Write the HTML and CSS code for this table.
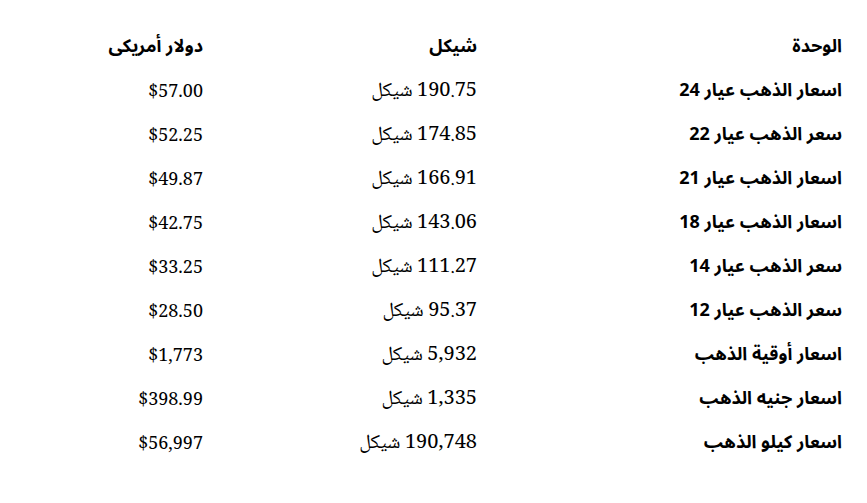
FILE: index.html
```html
<!DOCTYPE html>
<html lang="ar" dir="rtl">
<head><meta charset="utf-8"><title>أسعار الذهب</title><link rel="stylesheet" href="styles.css"></head>
<body>
<table class="prices">
  <thead>
    <tr><th class="c-unit">الوحدة</th><th class="c-ils">شيكل</th><th class="c-usd">دولار أمريكى</th></tr>
  </thead>
  <tbody>
    <tr><td class="c-unit">اسعار الذهب عيار 24</td><td class="c-ils">190.75 شيكل</td><td class="c-usd"><span class="usd">$57.00</span></td></tr>
    <tr><td class="c-unit">سعر الذهب عيار 22</td><td class="c-ils">174.85 شيكل</td><td class="c-usd"><span class="usd">$52.25</span></td></tr>
    <tr><td class="c-unit">اسعار الذهب عيار 21</td><td class="c-ils">166.91 شيكل</td><td class="c-usd"><span class="usd">$49.87</span></td></tr>
    <tr><td class="c-unit">اسعار الذهب عيار 18</td><td class="c-ils">143.06 شيكل</td><td class="c-usd"><span class="usd">$42.75</span></td></tr>
    <tr><td class="c-unit">سعر الذهب عيار 14</td><td class="c-ils">111.27 شيكل</td><td class="c-usd"><span class="usd">$33.25</span></td></tr>
    <tr><td class="c-unit">سعر الذهب عيار 12</td><td class="c-ils">95.37 شيكل</td><td class="c-usd"><span class="usd">$28.50</span></td></tr>
    <tr><td class="c-unit">اسعار أوقية الذهب</td><td class="c-ils">5,932 شيكل</td><td class="c-usd"><span class="usd">$1,773</span></td></tr>
    <tr><td class="c-unit">اسعار جنيه الذهب</td><td class="c-ils">1,335 شيكل</td><td class="c-usd"><span class="usd">$398.99</span></td></tr>
    <tr><td class="c-unit">اسعار كيلو الذهب</td><td class="c-ils">190,748 شيكل</td><td class="c-usd"><span class="usd">$56,997</span></td></tr>
  </tbody>
</table>
</body>
</html>
```
FILE: styles.css
```css
html,body{margin:0;background:#fff;color:#000}
body{padding:24px 25px 0}
.prices{width:817px;border-collapse:collapse;table-layout:fixed}
.prices th,.prices td{height:44px;padding:0;text-align:right;vertical-align:middle}
.c-unit{width:365px}
.c-ils{width:274px}
.prices th{font-family:"Noto Sans Arabic",sans-serif;font-weight:700;font-size:18px}
.prices td.c-unit{font-family:"Noto Sans Arabic",sans-serif;font-weight:700;font-size:18px}
.prices td.c-ils{font-family:"Noto Naskh Arabic",serif;font-size:20px;padding-top:3px;height:41px}
.prices td.c-usd{font-family:"Noto Serif",serif;font-size:18px}
.usd{direction:ltr;unicode-bidi:isolate}
```
